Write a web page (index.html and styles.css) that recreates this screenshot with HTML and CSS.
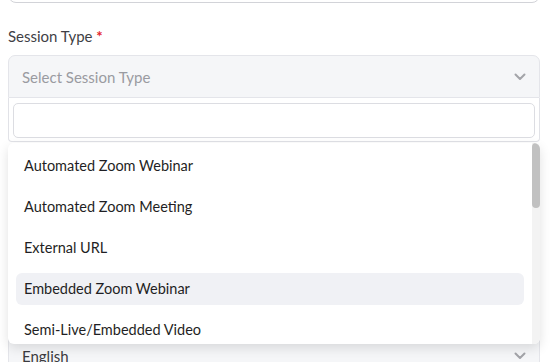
FILE: index.html
```html
<!DOCTYPE html>
<html lang="en">
<head>
    <meta charset="UTF-8">
    <meta name="viewport" content="width=device-width, initial-scale=1.0">
    <title>Session Settings</title>
    <link rel="stylesheet" href="styles.css">
</head>
<body>
    <div class="form">
        <!-- Previous field, scrolled mostly out of view -->
        <div class="field field-top">
            <input class="text-input" type="text">
        </div>

        <!-- Session Type select, opened -->
        <div class="field">
            <label class="field-label">Session Type <span class="required">*</span></label>
            <div class="select-wrap">
                <div class="select select-open">
                    <span class="select-placeholder">Select Session Type</span>
                    <svg class="chevron" viewBox="0 0 12 8" width="12" height="8">
                        <path d="M1.5 1.5 L6 6 L10.5 1.5" fill="none" stroke="currentColor" stroke-width="2" stroke-linecap="round" stroke-linejoin="round"/>
                    </svg>
                </div>

                <div class="dropdown">
                    <div class="dropdown-search">
                        <input class="search-input" type="text">
                    </div>
                    <div class="dropdown-panel">
                        <ul class="dropdown-list">
                            <li class="option">Automated Zoom Webinar</li>
                            <li class="option">Automated Zoom Meeting</li>
                            <li class="option">External URL</li>
                            <li class="option is-active">Embedded Zoom Webinar</li>
                            <li class="option">Semi-Live/Embedded Video</li>
                            <li class="option">Live Zoom Webinar</li>
                            <li class="option">Live Zoom Meeting</li>
                            <li class="option">Microsoft Teams</li>
                        </ul>
                        <!-- scrollbar track, drawn by hand -->
                        <div class="scroll-track">
                            <div class="scroll-thumb"></div>
                        </div>
                    </div>
                </div>
            </div>
        </div>

        <!-- Language select, partly covered by the dropdown -->
        <div class="field field-language">
            <label class="field-label">Language</label>
            <div class="select">
                <span class="select-value">English</span>
                <svg class="chevron" viewBox="0 0 12 8" width="12" height="8">
                    <path d="M1.5 1.5 L6 6 L10.5 1.5" fill="none" stroke="currentColor" stroke-width="2" stroke-linecap="round" stroke-linejoin="round"/>
                </svg>
            </div>
        </div>
    </div>
</body>
</html>
```

FILE: styles.css
```css
/* Base */
* {
    margin: 0;
    padding: 0;
    box-sizing: border-box;
}

body {
    font-family: 'Lato', 'Open Sans', sans-serif;
    color: #222;
    background-color: #fff;
    overflow: hidden;
}

.form {
    padding: 0 11px 0 8px;
}

/* Fields */
.field-top {
    margin-top: -40px;
}

.text-input {
    display: block;
    width: 100%;
    height: 43px;
    border: 1px solid #d2d3d8;
    border-radius: 8px;
    background: #fff;
}

.field-label {
    display: block;
    margin-top: 24px;
    margin-bottom: 9px;
    font-size: 15px;
    line-height: 19px;
    color: #3f3f46;
}

.required {
    color: #e5262b;
    font-weight: 700;
}

/* Select box */
.select-wrap {
    position: relative;
}

.select {
    display: flex;
    align-items: center;
    justify-content: space-between;
    height: 43px;
    padding: 0 13px 0 13px;
    border: 1px solid #e4e5ea;
    border-radius: 7px;
    background-color: #f5f6f8;
    font-size: 15px;
}

.select-open {
    border-bottom-left-radius: 0;
    border-bottom-right-radius: 0;
}

.select-placeholder {
    color: #9a9ba1;
}

.select-value {
    color: #3b3b40;
}

.chevron {
    color: #a3a4a9;
}

/* Dropdown panel */
.dropdown {
    position: absolute;
    top: 100%;
    left: 0;
    right: 0;
    z-index: 10;
}

.dropdown-search {
    padding: 5px 4px 3px 4px;
    border: 1px solid #e1e2e7;
    border-top: none;
    background: #fff;
    border-radius: 0 0 4px 4px;
}

.search-input {
    display: block;
    width: 100%;
    height: 35px;
    border: 1px solid #dcdde2;
    border-radius: 5px;
    background: #fff;
}

.dropdown-panel {
    display: flex;
    height: 201px;
    margin-top: 1px;
    background: #fff;
    border-radius: 6px;
    box-shadow: 0 4px 12px rgba(0, 0, 0, 0.12);
    overflow: hidden;
}

.dropdown-list {
    flex: 1;
    list-style: none;
    padding: 7px 8px 0 8px;
    overflow: hidden;
    display: flex;
    flex-direction: column;
    gap: 9px;
}

.scroll-track {
    flex: none;
    width: 8px;
    background: #f3f3f3;
}

.scroll-thumb {
    height: 65px;
    background: #c1c1c1;
    border-radius: 4px;
}

.option {
    flex: none;
    height: 32px;
    line-height: 32px;
    padding: 0 8px;
    border-radius: 6px;
    font-size: 14.5px;
    color: #1f1f24;
}

.option.is-active {
    background-color: #f0f1f5;
}

/* Language field */
.field-language .field-label {
    margin-top: 208px;
}
```
